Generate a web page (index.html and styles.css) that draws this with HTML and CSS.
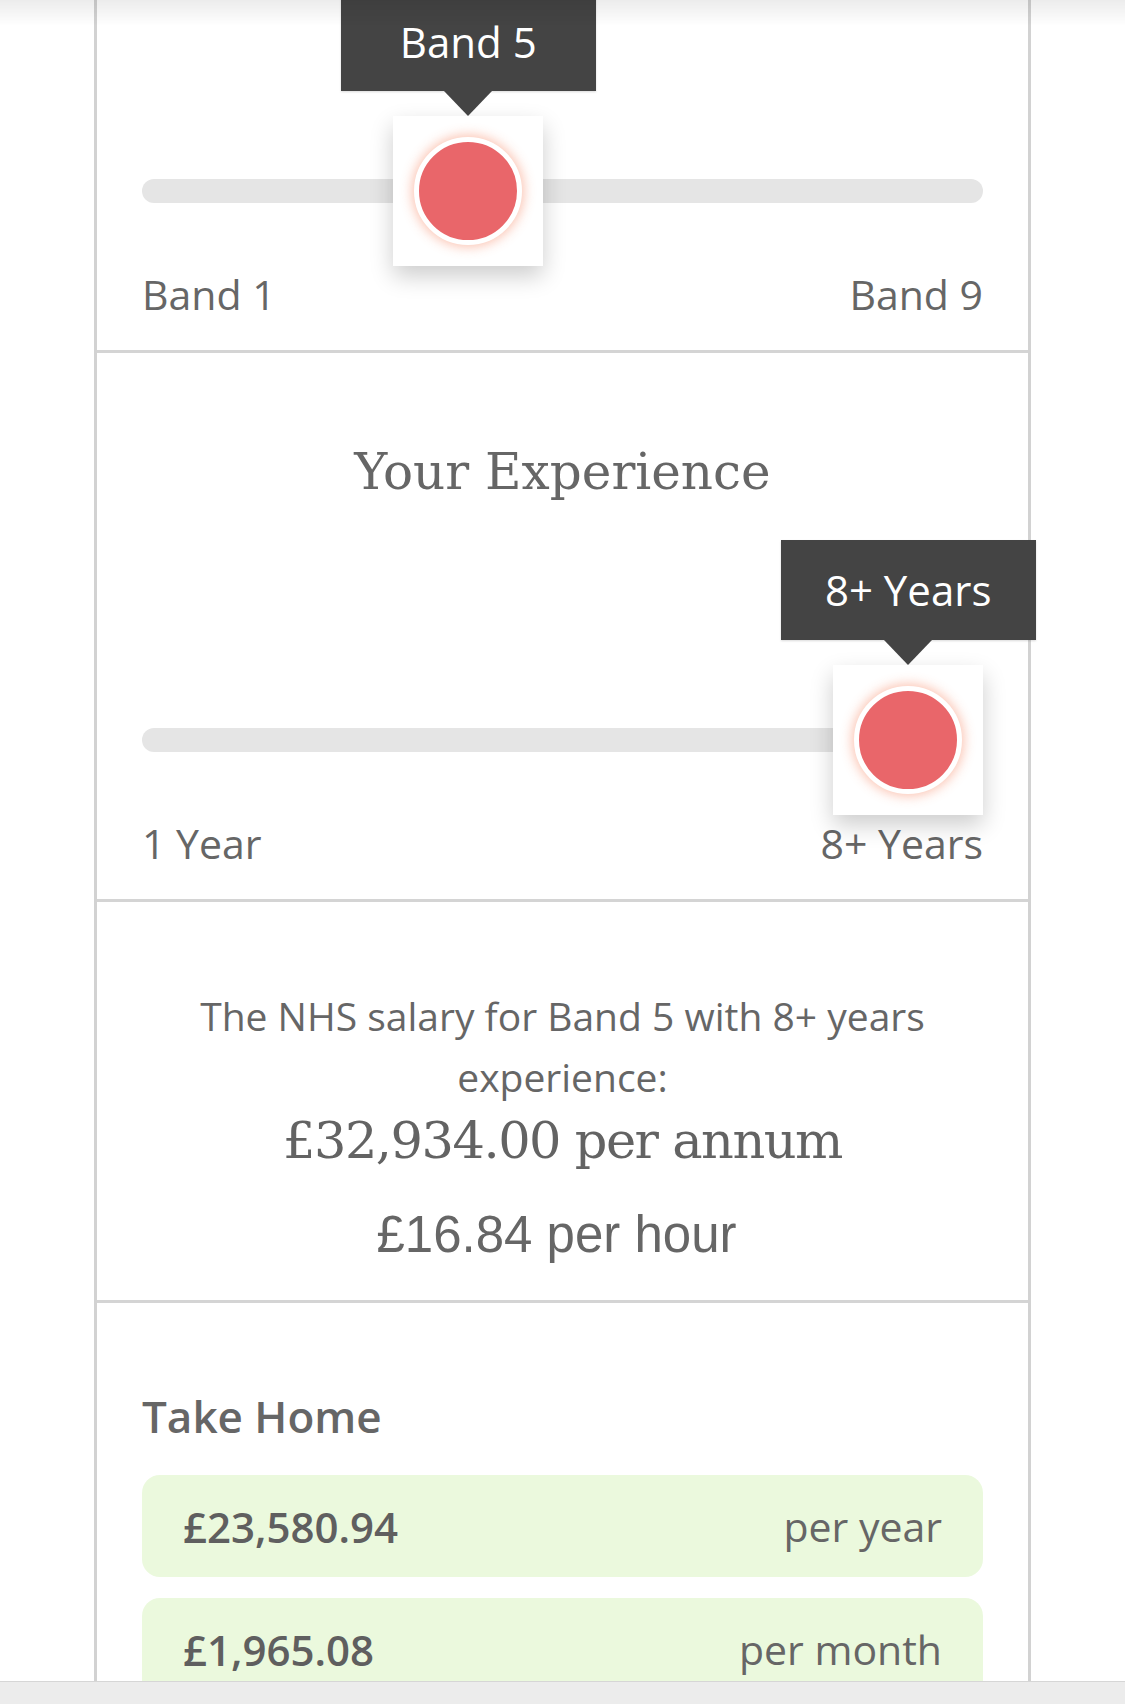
FILE: index.html
```html
<!DOCTYPE html>
<html lang="en">
<head>
<meta charset="utf-8">
<title>NHS Salary Calculator</title>
<link rel="stylesheet" href="styles.css">
</head>
<body>
<div class="top-shade"></div>
<main class="card">
  <section class="panel panel-band">
    <div class="slider">
      <div class="track"></div>
      <div class="thumb" style="--pos:38.8%">
        <div class="tip">Band 5</div>
        <div class="knob"></div>
      </div>
    </div>
    <div class="ends"><span>Band 1</span><span>Band 9</span></div>
  </section>

  <section class="panel panel-exp">
    <h2 class="heading">Your Experience</h2>
    <div class="slider">
      <div class="track"></div>
      <div class="thumb" style="--pos:91.1%">
        <div class="tip">8+ Years</div>
        <div class="knob"></div>
      </div>
    </div>
    <div class="ends"><span>1 Year</span><span>8+ Years</span></div>
  </section>

  <section class="panel panel-result">
    <p class="result-text">The NHS salary for Band 5 with 8+ years experience:</p>
    <p class="annum">£32,934.00 per annum</p>
    <p class="hourly">£16.84 per hour</p>
  </section>

  <section class="panel panel-take">
    <h3 class="take-title">Take Home</h3>
    <ul class="take-list">
      <li class="take-row"><span class="amount">£23,580.94</span><span class="period">per year</span></li>
      <li class="take-row"><span class="amount">£1,965.08</span><span class="period">per month</span></li>
    </ul>
  </section>
</main>
<div class="bottom-bar"></div>
</body>
</html>
```

FILE: styles.css
```css
html, body {
  margin: 0;
  padding: 0;
  background: #ffffff;
}

body {
  font-family: "Open Sans", "Liberation Sans", sans-serif;
  color: #666666;
  overflow: hidden;
  height: 1704px;
}

.top-shade {
  position: fixed;
  top: 0;
  left: 0;
  right: 0;
  height: 26px;
  background: linear-gradient(to bottom, rgba(0,0,0,0.075), rgba(0,0,0,0));
  z-index: 20;
  pointer-events: none;
}

.card {
  margin-left: 94px;
  width: 937px;
  box-sizing: border-box;
  border-left: 3px solid #d2d2d2;
  border-right: 3px solid #d2d2d2;
}

.panel {
  padding: 0 45px;
  border-bottom: 3px solid #d4d4d4;
}

.panel-band {
  padding-top: 116px;
  padding-bottom: 28px;
}

.panel-exp {
  padding-top: 90px;
  padding-bottom: 28px;
}

.heading {
  margin: 0;
  font-family: "DejaVu Serif", "Liberation Serif", serif;
  font-weight: normal;
  font-size: 50px;
  line-height: 58.8px;
  text-align: center;
  color: #666666;
}

.panel-exp .slider {
  margin-top: 163px;
}

.slider {
  position: relative;
  height: 150px;
  display: flex;
  align-items: center;
}

.track {
  flex: 1;
  height: 24px;
  border-radius: 12px;
  background: #e5e5e5;
}

.thumb {
  position: absolute;
  top: 0;
  left: var(--pos);
  width: 150px;
  height: 150px;
  margin-left: -75px;
  background: #ffffff;
  box-shadow: 0 10px 22px rgba(0,0,0,0.2);
  display: flex;
  align-items: center;
  justify-content: center;
  z-index: 2;
}

.knob {
  width: 98px;
  height: 98px;
  border-radius: 50%;
  background: #e9666a;
  border: 5px solid #ffffff;
  box-shadow: 0 0 12px 2px rgba(246,120,80,0.45);
}

.tip {
  position: absolute;
  left: 50%;
  bottom: calc(100% + 25px);
  width: 255px;
  height: 100px;
  margin-left: -127.5px;
  background: #444444;
  color: #ffffff;
  font-size: 42px;
  display: flex;
  align-items: center;
  justify-content: center;
  box-shadow: 0 1px 2px rgba(0,0,0,0.15);
}

.tip::after {
  content: "";
  position: absolute;
  top: 100%;
  left: 50%;
  margin-left: -24px;
  border-left: 24px solid transparent;
  border-right: 24px solid transparent;
  border-top: 25px solid #444444;
}

.ends {
  display: flex;
  justify-content: space-between;
  font-size: 41px;
  line-height: 56px;
  color: #666666;
}

.panel-result {
  padding-top: 83px;
  padding-bottom: 35px;
  text-align: center;
}

.result-text {
  margin: 0;
  font-size: 39px;
  line-height: 61px;
  color: #666666;
}

.annum {
  margin: 4px 0 0;
  font-family: "DejaVu Serif", "Liberation Serif", serif;
  font-size: 51px;
  letter-spacing: -1.5px;
  line-height: 60px;
  color: #636363;
}

.hourly {
  margin: 33px 12px 0 0;
  font-family: "Liberation Sans", Arial, sans-serif;
  font-size: 51px;
  line-height: 61.2px;
  color: #666666;
}

.panel-take {
  padding-top: 83px;
  padding-bottom: 60px;
  border-bottom: none;
}

.take-title {
  margin: 0;
  font-size: 44px;
  font-weight: 600;
  line-height: 60px;
  color: #666666;
}

.take-list {
  list-style: none;
  margin: 29px 0 0;
  padding: 0;
  display: flex;
  flex-direction: column;
  gap: 21px;
}

.take-row {
  height: 102px;
  box-sizing: border-box;
  padding: 0 41px;
  border-radius: 18px;
  background: #ebf9dd;
  display: flex;
  align-items: center;
  justify-content: space-between;
  font-size: 41px;
}

.amount {
  font-size: 42px;
  font-weight: 600;
  color: #5f5f5f;
}

.period {
  color: #666666;
}

.bottom-bar {
  position: fixed;
  left: 0;
  right: 0;
  bottom: 0;
  height: 22px;
  background: #ececec;
  border-top: 1px solid #d6d6d6;
  z-index: 20;
}
```
